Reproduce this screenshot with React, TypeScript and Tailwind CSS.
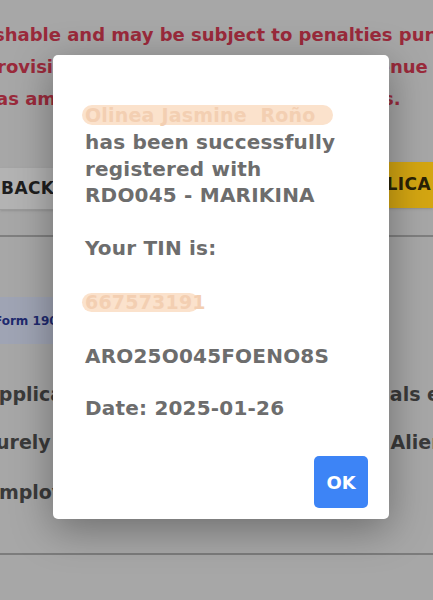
export default function App() {
  const font = { fontFamily: '"DejaVu Sans", "Noto Sans", sans-serif' }

  return (
    <div className="relative h-[600px] w-[433px] overflow-hidden bg-[#a7a7a7]" style={font}>
      {/* Page behind the dialog */}
      <div className="flex flex-col">
        <div className="flex flex-col gap-[11px] pt-[24px] text-[18px] font-bold leading-[21px] text-[#9a2a3b] whitespace-nowrap">
          <p className="ml-[-6px]">shable and may be subject to penalties pursuant</p>
          <p className="ml-[-3px]">rovisions of the National Internal Revenue Code</p>
          <p className="ml-[-4px]">as amended, and other applicable laws.</p>
        </div>

        <div className="mt-[53px] flex items-start justify-between">
          <div className="mt-[6px] flex h-[42px] w-[140px] items-center rounded-r border-b border-[#9a9a9a] bg-[#b3b3b3] pl-[1px] text-[17px] font-bold tracking-wide text-[#1e1e1e] shadow-sm">
            BACK
          </div>
          <div className="flex h-[46px] w-[160px] items-center justify-end bg-[#d4a612] pr-[2px] text-[17px] font-bold tracking-wide text-[#2a2206] shadow-sm">
            <span>APPLICA</span>
          </div>
        </div>

        <div className="mt-[25px] h-[2px] bg-[#7f7f7f]" />

        <div className="mt-[60px] flex h-[47px] w-[150px] items-center bg-[#9fa4b4] text-[12px] font-bold text-[#1e2a6e] whitespace-nowrap">
          <span className="ml-[-6px]">Form 1902</span>
        </div>

        <div className="flex flex-col gap-[27px] pt-[40px] text-[19px] font-bold leading-[21px] text-[#3a3a3a] whitespace-nowrap">
          <div className="flex justify-between">
            <span className="ml-[-14px]">applica</span>
            <span className="mr-[-20px]">als eli</span>
          </div>
          <div className="flex justify-between">
            <span className="ml-[-4px]">urely</span>
            <span className="mr-[-23px]">Aliens</span>
          </div>
          <div className="flex justify-between">
            <span className="ml-[-14px] mt-[2px]">employ</span>
          </div>
        </div>

        <div className="mt-[50px] h-[2px] bg-[#7c7c7c]" />
      </div>

      {/* Dialog */}
      <div className="absolute left-[53px] top-[55px] flex h-[464px] w-[336px] flex-col rounded-[5px] bg-white shadow-[0_10px_40px_rgba(0,0,0,0.35)]">
        <div className="flex flex-col px-[32px] pt-[50px] text-[20px] font-bold leading-[26.5px] tracking-[0.2px] text-[#6d6d6d]">
          <div className="relative h-[20px] w-[251px] -ml-[3px] rounded-full bg-[#fbe2cc] text-[19px] leading-[20px] text-[#f3cfb2] whitespace-nowrap pl-[3px]">
            Olinea Jasmine&nbsp; Roño
          </div>
          <p className="mt-[4px]">has been successfully</p>
          <p>registered with</p>
          <p>RDO045 - MARIKINA</p>
          <p className="mt-[26.5px]">Your TIN is:</p>
          <div className="mt-[31px] h-[19px] w-[117px] -ml-[3px] rounded-full bg-[#fbe2cc] pl-[3px] text-[19px] leading-[19px] text-[#f3cfb2]">
            667573191
          </div>
          <p className="mt-[31px]">ARO25O045FOENO8S</p>
          <p className="mt-[25.5px]">Date: 2025-01-26</p>
        </div>
        <div className="mt-auto flex justify-end pb-[11px] pr-[21px]">
          <button className="flex h-[52px] w-[54px] items-center justify-center rounded-[5px] bg-[#3d84f6] text-[18px] font-bold text-white">
            OK
          </button>
        </div>
      </div>
    </div>
  )
}
